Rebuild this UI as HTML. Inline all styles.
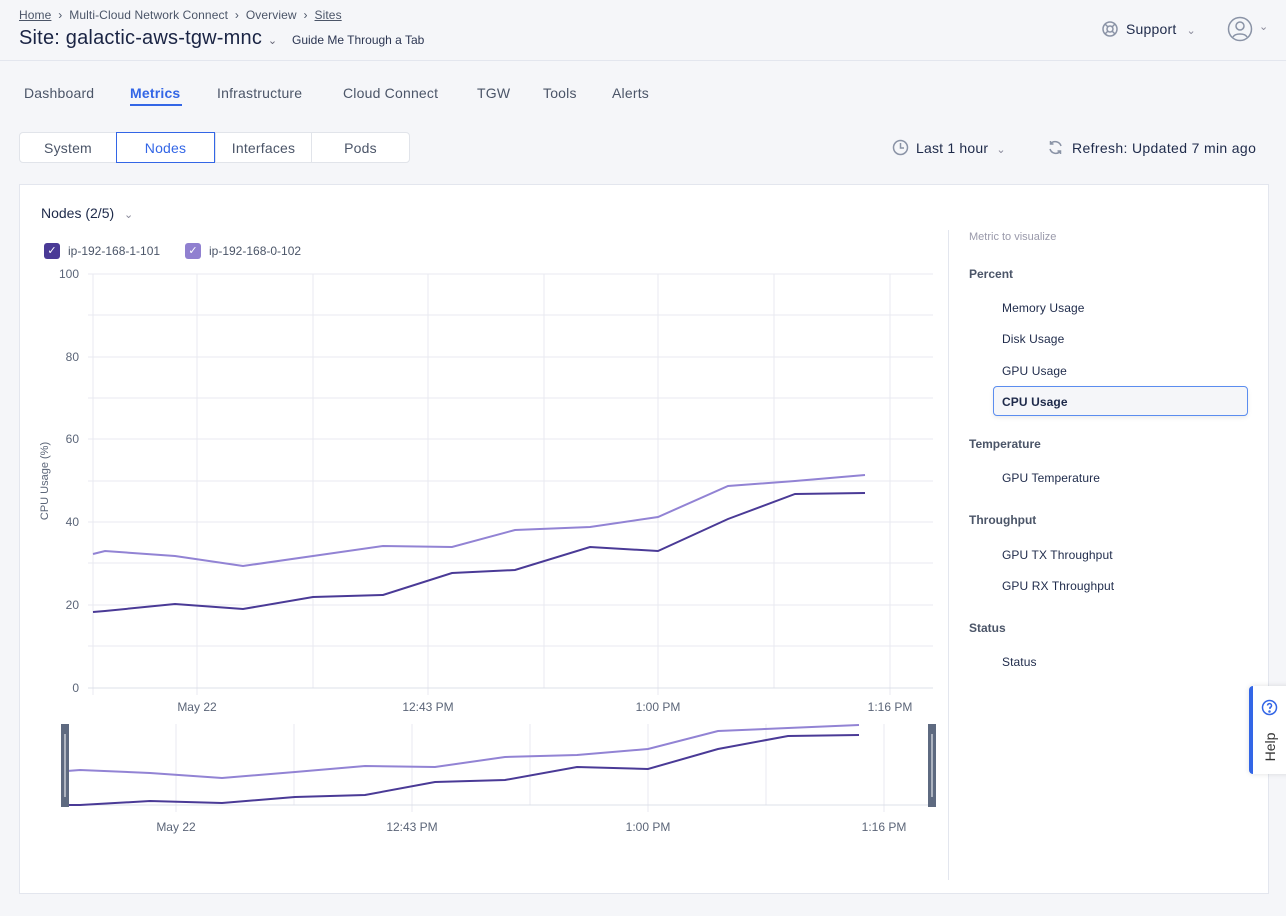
<!DOCTYPE html>
<html><head><meta charset="utf-8"><style>
body{margin:0;width:1286px;height:916px;background:#f5f6f9;font-family:"Liberation Sans",sans-serif;color:#1e2a4a;position:relative;overflow:hidden}
.a{position:absolute;white-space:nowrap}
.tab{font-size:14px;color:#4b5568;top:85px;letter-spacing:0.2px}
.seg{position:absolute;top:132px;height:31px;background:#fff;border:1px solid #e1e4ea;font-size:14px;color:#4b5568;text-align:center;line-height:31px;box-sizing:border-box;letter-spacing:0.2px}
.mi{font-size:12px;color:#1e2a4a;left:1002px;letter-spacing:0.1px}
.mh{font-size:12px;font-weight:bold;color:#4b5568;left:969px}
</style></head><body>
<div class="a" style="left:19px;top:8px;font-size:12px;color:#4b5568;letter-spacing:0.1px"><span style="text-decoration:underline">Home</span> &nbsp;›&nbsp; Multi-Cloud Network Connect &nbsp;›&nbsp; Overview &nbsp;›&nbsp; <span style="text-decoration:underline">Sites</span></div>
<div class="a" style="left:19px;top:27px;font-size:20px;color:#1a2444;letter-spacing:0.2px">Site: galactic-aws-tgw-mnc <span style="font-size:11px;color:#667">⌄</span></div>
<div class="a" style="left:292px;top:33px;font-size:12px;color:#2c3652">Guide Me Through a Tab</div>
<svg class="a" style="left:1101px;top:20px" width="18" height="18" viewBox="0 0 18 18" fill="none" stroke="#8a93a6" stroke-width="1.5"><circle cx="9" cy="9" r="7"/><circle cx="9" cy="9" r="3"/><path d="M4 4l3 3M14 4l-3 3M4 14l3-3M14 14l-3-3"/></svg>
<div class="a" style="left:1126px;top:21px;font-size:14px;color:#1e2a4a;letter-spacing:0.2px">Support <span style="color:#889;font-size:11px;margin-left:6px">⌄</span></div>
<svg class="a" style="left:1227px;top:16px" width="26" height="26" viewBox="0 0 26 26" fill="none" stroke="#8a93a6" stroke-width="1.5"><circle cx="13" cy="13" r="11.5"/><circle cx="13" cy="10" r="4"/><path d="M6 21c2-4 12-4 14 0"/></svg>
<div class="a" style="left:1259px;top:20px;font-size:11px;color:#889">⌄</div>
<div class="a" style="left:0;top:60px;width:1286px;height:1px;background:#e3e6ee"></div>
<div class="a tab" style="left:24px">Dashboard</div>
<div class="a tab" style="left:130px;color:#3366e6;font-weight:bold">Metrics</div>
<div class="a" style="left:130px;top:104px;width:52px;height:2px;background:#3366e6"></div>
<div class="a tab" style="left:217px">Infrastructure</div>
<div class="a tab" style="left:343px">Cloud Connect</div>
<div class="a tab" style="left:477px">TGW</div>
<div class="a tab" style="left:543px">Tools</div>
<div class="a tab" style="left:612px">Alerts</div>
<div class="seg" style="left:19px;width:98px;border-radius:4px 0 0 4px">System</div>
<div class="seg" style="left:215px;width:97px">Interfaces</div>
<div class="seg" style="left:311px;width:99px;border-radius:0 4px 4px 0">Pods</div>
<div class="seg" style="left:116px;width:99px;border-color:#3366e6;color:#3366e6">Nodes</div>
<svg class="a" style="left:892px;top:139px" width="17" height="17" viewBox="0 0 17 17" fill="none" stroke="#8a93a6" stroke-width="1.5"><circle cx="8.5" cy="8.5" r="7"/><path d="M8.5 4v5h3.5"/></svg>
<div class="a" style="left:916px;top:140px;font-size:14px;letter-spacing:0.2px">Last 1 hour <span style="color:#889;font-size:11px;margin-left:4px">⌄</span></div>
<svg class="a" style="left:1047px;top:139px" width="17" height="17" viewBox="0 0 17 17" fill="none" stroke="#8a93a6" stroke-width="1.5"><path d="M14 7A6 6 0 0 0 3.5 5M3 10a6 6 0 0 0 10.5 2M3.5 2v3h3M13.5 15v-3h-3"/></svg>
<div class="a" style="left:1072px;top:140px;font-size:14px;letter-spacing:0.35px">Refresh: Updated 7 min ago</div>
<div class="a" style="left:19px;top:184px;width:1250px;height:710px;background:#fff;border:1px solid #e3e6ee;box-sizing:border-box"></div>
<div class="a" style="left:41px;top:205px;font-size:14px">Nodes (2/5) <span style="color:#889;font-size:11px;margin-left:6px">⌄</span></div>
<div class="a" style="left:44px;top:243px;width:16px;height:16px;border-radius:3px;background:#4a3a96;color:#fff;font-size:11px;text-align:center;line-height:16px">✓</div>
<div class="a" style="left:68px;top:244px;font-size:12px;color:#4b5568">ip-192-168-1-101</div>
<div class="a" style="left:185px;top:243px;width:16px;height:16px;border-radius:3px;background:#9080d0;color:#fff;font-size:11px;text-align:center;line-height:16px">✓</div>
<div class="a" style="left:209px;top:244px;font-size:12px;color:#4b5568">ip-192-168-0-102</div>
<div class="a" style="left:948px;top:230px;width:1px;height:650px;background:#e3e6ee"></div>
<svg class="a" style="left:0;top:0" width="940" height="850" font-family="Liberation Sans" font-size="12" fill="#5b6578">
<g stroke="#e8eaf0" stroke-width="1">
<path d="M88 274H933M88 315H933M88 357H933M88 398H933M88 439H933M88 481H933M88 522H933M88 563H933M88 605H933M88 646H933"/>
<path d="M93 274V695M197 274V695M313 274V688M428 274V695M544 274V688M658 274V695M774 274V688M890 274V695"/>
<path d="M67 724V805M176 724V812M294 724V805M412 724V812M530 724V805M648 724V812M766 724V805M884 724V812"/>
</g>
<path d="M88 688H933M67 805H933" stroke="#dde0e8"/>
<g text-anchor="end"><text x="79" y="278">100</text><text x="79" y="361">80</text><text x="79" y="443">60</text><text x="79" y="526">40</text><text x="79" y="609">20</text><text x="79" y="692">0</text></g>
<text transform="translate(48,481) rotate(-90)" text-anchor="middle" font-size="11">CPU Usage (%)</text>
<g text-anchor="middle"><text x="197" y="711">May 22</text><text x="428" y="711">12:43 PM</text><text x="658" y="711">1:00 PM</text><text x="890" y="711">1:16 PM</text>
<text x="176" y="831">May 22</text><text x="412" y="831">12:43 PM</text><text x="648" y="831">1:00 PM</text><text x="884" y="831">1:16 PM</text></g>
<g fill="none" stroke-width="2">
<polyline stroke="#9283d4" points="93,554 105,551 175,556 243,566 313,556 383,546 452,547 515,530 590,527 658,517 728,486 795,481 865,475"/>
<polyline stroke="#4a3a96" points="93,612 105,611 175,604 243,609 313,597 383,595 452,573 515,570 590,547 658,551 728,519 795,494 865,493"/>
<polyline stroke="#9283d4" points="67,771 80,770 150,773 222,778 295,772 365,766 435,767 505,757 577,755 648,749 718,731 788,728 859,725"/>
<polyline stroke="#4a3a96" points="67,805 80,805 150,801 222,803 295,797 365,795 435,782 505,780 577,767 648,769 718,749 788,736 859,735"/>
</g>
<rect x="61" y="724" width="8" height="83" fill="#5e6a80"/><rect x="928" y="724" width="8" height="83" fill="#5e6a80"/>
<path d="M65 734V797M932 734V797" stroke="#fff" stroke-width="1"/>
</svg>
<div class="a" style="left:969px;top:231px;font-size:11px;color:#99a">Metric to visualize</div>
<div class="a mh" style="top:267px">Percent</div>
<div class="a mi" style="top:301px">Memory Usage</div>
<div class="a mi" style="top:332px">Disk Usage</div>
<div class="a mi" style="top:364px">GPU Usage</div>
<div class="a" style="left:993px;top:386px;width:255px;height:30px;border:1px solid #5b8def;border-radius:4px;background:#f5f6f9;box-sizing:border-box;box-shadow:0 2px 4px rgba(0,0,0,.08)"></div>
<div class="a mi" style="top:395px;font-weight:bold">CPU Usage</div>
<div class="a mh" style="top:437px">Temperature</div>
<div class="a mi" style="top:471px">GPU Temperature</div>
<div class="a mh" style="top:513px">Throughput</div>
<div class="a mi" style="top:548px">GPU TX Throughput</div>
<div class="a mi" style="top:579px">GPU RX Throughput</div>
<div class="a mh" style="top:621px">Status</div>
<div class="a mi" style="top:655px">Status</div>
<div class="a" style="left:1249px;top:686px;width:40px;height:88px;background:#fff;border-left:4px solid #3366e6;border-radius:4px 0 0 4px;box-shadow:0 0 6px rgba(0,0,0,.12)"></div>
<svg class="a" style="left:1261px;top:699px" width="17" height="17" viewBox="0 0 17 17" fill="none" stroke="#3366e6" stroke-width="1.5"><circle cx="8.5" cy="8.5" r="7"/><path d="M6.5 6.5a2 2 0 1 1 2.5 2v1.5"/><circle cx="8.5" cy="12.5" r=".5" fill="#3366e6"/></svg>
<div class="a" style="left:1255px;font-size:14px;color:#333;transform:rotate(-90deg);transform-origin:center;width:30px;text-align:center;line-height:20px;top:737px">Help</div>
</body></html>
